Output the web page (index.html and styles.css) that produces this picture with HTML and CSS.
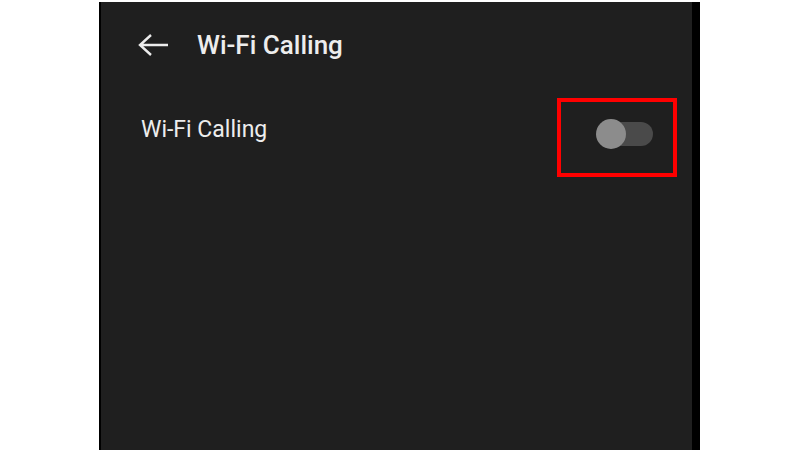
FILE: index.html
```html
<!DOCTYPE html>
<html>
<head>
<meta charset="utf-8">
<link rel="stylesheet" href="styles.css">
</head>
<body>
<div class="phone">
  <div class="screen">
    <header class="appbar">
      <svg class="back" width="32" height="24" viewBox="0 0 32 24">
        <path d="M2 12 H30 M13 2 L2 12 L13 22" fill="none" stroke="#ececec" stroke-width="2.4" stroke-linecap="butt" stroke-linejoin="miter"/>
      </svg>
      <h1 class="title">Wi-Fi Calling</h1>
    </header>
    <div class="row">
      <span class="label">Wi-Fi Calling</span>
      <div class="highlight">
        <div class="switch"><div class="knob"></div></div>
      </div>
    </div>
  </div>
</div>
</body>
</html>
```
FILE: styles.css
```css
html, body {
  margin: 0;
  padding: 0;
  background: #ffffff;
  width: 800px;
  height: 450px;
  overflow: hidden;
}
.phone {
  margin: 2px 0 0 99px;
  width: 601px;
  height: 460px;
  background: #000;
  display: flex;
}
.screen {
  margin-left: 2px;
  width: 591px;
  background: #1f1f1f;
  font-family: Roboto, "Liberation Sans", sans-serif;
  color: #ededed;
}
.appbar {
  display: flex;
  align-items: center;
  height: 86px;
  padding-left: 37px;
}
.back {
  display: block;
  margin-right: 27px;
}
.title {
  margin: 0;
  font-size: 26px;
  font-weight: 500;
  letter-spacing: 0;
}
.row {
  display: flex;
  align-items: center;
  justify-content: space-between;
  padding-left: 40px;
  padding-right: 15px;
  height: 84px;
}
.label {
  font-size: 23px;
  font-weight: 400;
  margin-top: -2px;
}
.highlight {
  width: 112px;
  height: 71px;
  margin-top: 14px;
  border: 4px solid #ff0000;
  display: flex;
  align-items: center;
  justify-content: center;
}
.switch {
  position: relative;
  width: 56px;
  height: 24px;
  border-radius: 12px;
  background: #4a4a4a;
  margin-left: 16px;
  margin-top: -6px;
}
.knob {
  position: absolute;
  left: -1px;
  top: -3px;
  width: 30px;
  height: 30px;
  border-radius: 50%;
  background: #8c8c8c;
}
```
